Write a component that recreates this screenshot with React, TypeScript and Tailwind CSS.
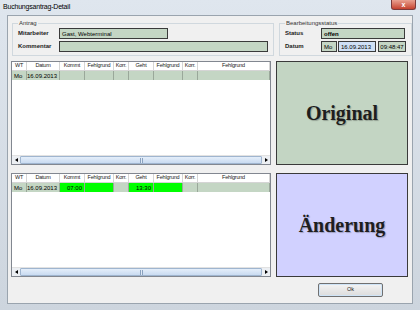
import type { ReactNode } from 'react'

const font = { fontFamily: '"Liberation Sans", Arial, sans-serif' }

const cols = [
  { label: 'WT', w: 'w-[15px]' },
  { label: 'Datum', w: 'w-[33px]' },
  { label: 'Kommt', w: 'w-[25px]' },
  { label: 'Fehlgrund', w: 'w-[29px]' },
  { label: 'Korr.', w: 'w-[15px]' },
  { label: 'Geht', w: 'w-[25px]' },
  { label: 'Fehlgrund', w: 'w-[29px]' },
  { label: 'Korr.', w: 'w-[15px]' },
  { label: 'Fehlgrund', w: 'flex-1' },
]

function Field({ children, className = '' }: { children?: ReactNode; className?: string }) {
  return (
    <div
      className={`flex h-[11px] items-center border border-[#3a3a3a] bg-[#c4d6c4] px-[2px] text-[6px] leading-none text-black ${className}`}
    >
      {children}
    </div>
  )
}

function ScrollBar() {
  return (
    <div className="flex h-[9px] border-t border-[#e2e2e2] bg-[#eceff3]">
      <div className="flex w-[8px] items-center justify-center">
        <div className="h-0 w-0 border-y-[2.5px] border-r-[3px] border-y-transparent border-r-black" />
      </div>
      <div className="flex flex-1 items-center justify-center rounded-[1px] border border-[#9fb5cf] bg-gradient-to-b from-[#e4eefa] to-[#c9dbf1]">
        <div className="h-[5px] w-[3px] border-x border-[#8aa2bf] bg-[#dfe9f6]" />
      </div>
      <div className="flex w-[8px] items-center justify-center">
        <div className="h-0 w-0 border-y-[2.5px] border-l-[3px] border-y-transparent border-l-black" />
      </div>
    </div>
  )
}

function Table({ changed }: { changed?: boolean }) {
  const values = ['Mo', '16.09.2013', changed ? '07:00' : '', '', '', changed ? '13:30' : '', '', '', '']
  const green = [false, false, true, true, false, true, true, false, false]
  return (
    <div className="flex h-[104px] w-[260px] flex-col border border-[#828790] bg-white">
      <div className="flex h-[9px] border-b border-[#d5d5d5] bg-white">
        {cols.map((c, i) => (
          <div
            key={i}
            className={`${c.w} flex items-center justify-center whitespace-nowrap border-r border-[#d5d5d5] text-[5.5px] leading-none tracking-[-0.2px] text-[#222]`}
          >
            {c.label}
          </div>
        ))}
      </div>
      <div className="flex h-[9px] bg-[#c4d6c4]">
        {cols.map((c, i) => (
          <div
            key={i}
            className={`${c.w} flex items-center border-r border-[#9aa89a] px-[2px] text-[6px] leading-none text-black ${
              i === 0 ? 'justify-start' : 'justify-end'
            } ${changed && green[i] ? 'bg-[#00ff00]' : ''}`}
          >
            {values[i]}
          </div>
        ))}
      </div>
      <div className="flex-1" />
      <ScrollBar />
    </div>
  )
}

function Panel({ text, bg }: { text: string; bg: string }) {
  return (
    <div
      className={`flex h-[104px] w-[132px] items-center justify-center border border-[#3a3a3a] ${bg}`}
    >
      <span
        className="text-[20px] font-bold text-[#1e1e1e]"
        style={{
          fontFamily: '"Liberation Serif", "Times New Roman", serif',
          textShadow: '1px 1px 1px rgba(0,0,0,0.25)',
        }}
      >
        {text}
      </span>
    </div>
  )
}

export default function App() {
  return (
    <div
      className="flex h-[310px] w-[420px] flex-col overflow-hidden bg-gradient-to-b from-[#dfe6ee] to-[#cdd5de] px-[1px]"
      style={font}
    >
      {/* title bar */}
      <div className="relative h-[15px] shrink-0">
        <span className="absolute left-[2px] top-[2px] text-[7px] font-medium leading-[9px] tracking-[-0.2px] text-black">
          Buchungsantrag-Detail
        </span>
        <div className="absolute right-[3px] top-0 flex h-[10px] w-[25px] items-center justify-center rounded-b-[3px] border border-t-0 border-[#7a3a3a] bg-gradient-to-b from-[#e8a090] to-[#c4402e] text-[7px] font-bold leading-none text-white">
          x
        </div>
      </div>

      {/* client area */}
      <div className="mx-[6px] mb-[6px] flex flex-1 flex-col border border-[#9aa4ae] bg-[#f0f0f0] px-[3px] pt-[3px]">
        <div className="flex gap-[5px] pl-[1px]">
          <fieldset className="h-[37px] w-[260px] border border-[#d0d8de] px-[5px]">
            <legend className="px-[1px] text-[6px] leading-[8px] text-[#333]">Antrag</legend>
            <div className="flex flex-col gap-[2px] pt-[1px]">
              <div className="flex items-center">
                <span className="w-[41px] text-[6px] font-semibold text-[#222]">Mitarbeiter</span>
                <Field className="w-[109px]">Gast, Webterminal</Field>
              </div>
              <div className="flex items-center">
                <span className="w-[41px] text-[6px] font-semibold text-[#222]">Kommentar</span>
                <Field className="w-[209px]" />
              </div>
            </div>
          </fieldset>
          <fieldset className="h-[37px] w-[131px] border border-[#d0d8de] px-[5px]">
            <legend className="px-[1px] text-[6px] leading-[8px] text-[#333]">Bearbeitungsstatus</legend>
            <div className="flex flex-col gap-[2px] pt-[1px]">
              <div className="flex items-center">
                <span className="w-[36px] text-[6px] font-semibold text-[#222]">Status</span>
                <Field className="w-[84px] font-bold">offen</Field>
              </div>
              <div className="flex items-center">
                <span className="w-[36px] text-[6px] font-semibold text-[#222]">Datum</span>
                <Field className="w-[16px]">Mo</Field>
                <Field className="ml-[1px] w-[38px] !bg-[#cfe0f5]">16.09.2013</Field>
                <Field className="ml-[2px] w-[28px] justify-center">09:48:47</Field>
              </div>
            </div>
          </fieldset>
        </div>

        <div className="mt-[5px] flex gap-[5px]">
          <Table />
          <Panel text="Original" bg="bg-[#c3d5c3]" />
        </div>

        <div className="mt-[8px] flex gap-[5px]">
          <Table changed />
          <Panel text="Änderung" bg="bg-[#d1d1ff]" />
        </div>

        <div className="mt-[6px] flex justify-end pr-[26px]">
          <button className="flex h-[14px] w-[65px] items-center justify-center rounded-[2px] border border-[#707070] bg-gradient-to-b from-[#f4f4f4] to-[#dcdcdc] text-[5.5px] leading-none text-[#222] shadow-[inset_0_0_0_1px_#cfe4f7]">
            Ok
          </button>
        </div>
      </div>
    </div>
  )
}
